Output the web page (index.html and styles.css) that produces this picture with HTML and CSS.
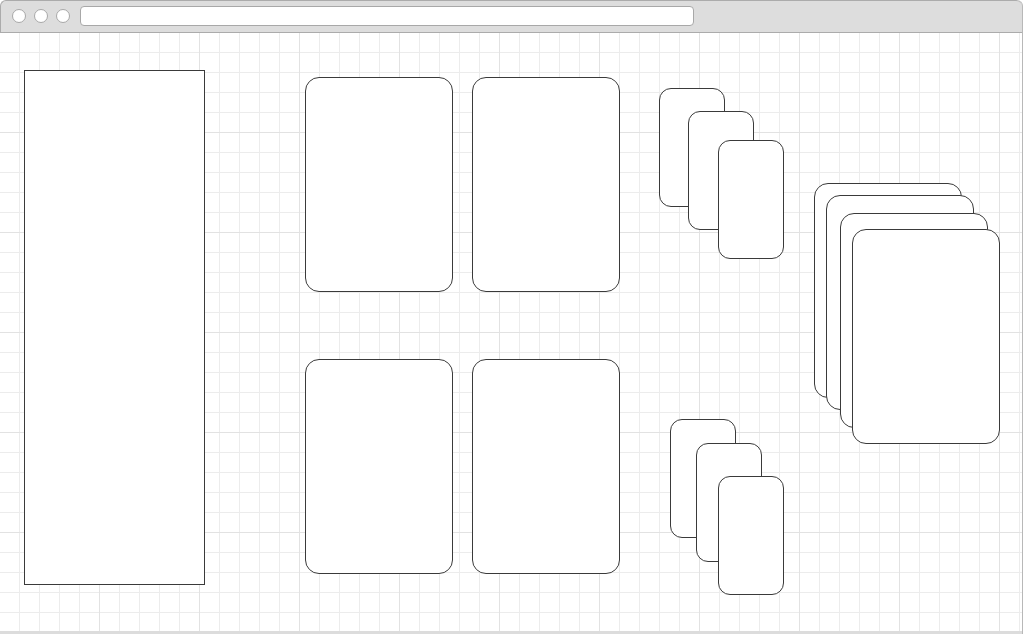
FILE: index.html
```html
<!DOCTYPE html>
<html>
<head>
    <title>Wireframe</title>
    <link rel="stylesheet" href="styles.css">
</head>
<body>
    <div class="window">
        <div class="titlebar">
            <span class="dot"></span>
            <span class="dot"></span>
            <span class="dot"></span>
            <div class="address"></div>
        </div>
        <div class="canvas">
            <!-- sidebar -->
            <div class="shape panel" style="left: 24px; top: 37px;"></div>

            <!-- 2x2 cards -->
            <div class="shape card" style="left: 305px; top: 44px;"></div>
            <div class="shape card" style="left: 472px; top: 44px;"></div>
            <div class="shape card" style="left: 305px; top: 326px;"></div>
            <div class="shape card" style="left: 472px; top: 326px;"></div>

            <!-- small stack, top -->
            <div class="shape mini" style="left: 659px; top: 55px;"></div>
            <div class="shape mini" style="left: 688px; top: 78px;"></div>
            <div class="shape mini" style="left: 718px; top: 107px;"></div>

            <!-- small stack, bottom -->
            <div class="shape mini" style="left: 670px; top: 386px;"></div>
            <div class="shape mini" style="left: 696px; top: 410px;"></div>
            <div class="shape mini" style="left: 718px; top: 443px;"></div>

            <!-- big stack -->
            <div class="shape card" style="left: 814px; top: 150px;"></div>
            <div class="shape card" style="left: 826px; top: 162px;"></div>
            <div class="shape card" style="left: 840px; top: 180px;"></div>
            <div class="shape card" style="left: 852px; top: 196px;"></div>
        </div>
        <div class="footer"></div>
    </div>
</body>
</html>
```

FILE: styles.css
```css
html, body {
    margin: 0;
    padding: 0;
    background-color: #ffffff;
    overflow: hidden;
}

.window {
    width: 1023px;
    height: 634px;
    box-sizing: border-box;
    display: flex;
    flex-direction: column;
    border-right: 1px solid #b8b8b8;
    border-top-right-radius: 6px;
}

.titlebar {
    height: 33px;
    box-sizing: border-box;
    display: flex;
    align-items: center;
    gap: 8px;
    padding: 0 0 1px 11px;
    background-color: #dddddd;
    border: 1px solid #ababab;
    border-right: none;
    border-top-left-radius: 6px;
    border-top-right-radius: 6px;
    flex-shrink: 0;
}

.dot {
    width: 14px;
    height: 14px;
    box-sizing: border-box;
    border-radius: 50%;
    background-color: #ffffff;
    border: 1px solid #a8a8a8;
}

.address {
    width: 614px;
    height: 20px;
    box-sizing: border-box;
    margin-left: 2px;
    background-color: #ffffff;
    border: 1px solid #a8a8a8;
    border-radius: 4px;
}

.canvas {
    position: relative;
    flex: 1;
    overflow: hidden;
    background-color: #ffffff;
    background-image:
        linear-gradient(to right, transparent 99px, #e2e2e2 99px),
        linear-gradient(to bottom, transparent 99px, #e2e2e2 99px),
        linear-gradient(to right, transparent 19px, #ececec 19px),
        linear-gradient(to bottom, transparent 19px, #ececec 19px);
    background-size: 100px 100px, 100px 100px, 20px 20px, 20px 20px;
}

.footer {
    height: 3px;
    background-color: #dcdcdc;
    flex-shrink: 0;
}

.shape {
    position: absolute;
    box-sizing: border-box;
    background-color: #ffffff;
    border: 1px solid #3a3a3a;
}

.panel {
    width: 181px;
    height: 515px;
}

.card {
    width: 148px;
    height: 215px;
    border-radius: 14px;
}

.mini {
    width: 66px;
    height: 119px;
    border-radius: 12px;
}
```
